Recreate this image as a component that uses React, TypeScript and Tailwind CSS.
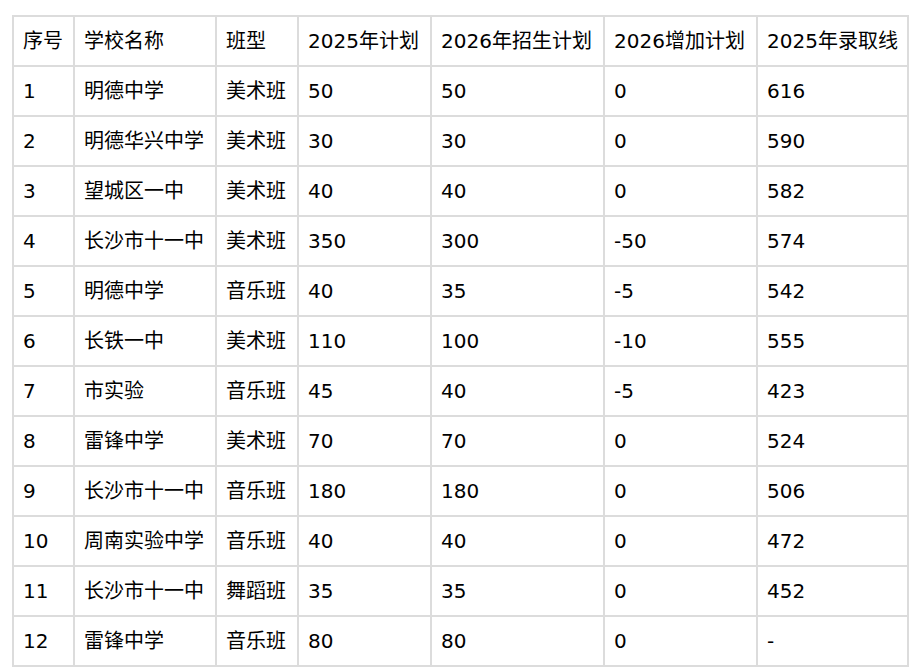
import React from "react";

const headers = ["序号", "学校名称", "班型", "2025年计划", "2026年招生计划", "2026增加计划", "2025年录取线"];
const rows: string[][] = [
  ["1", "明德中学", "美术班", "50", "50", "0", "616"],
  ["2", "明德华兴中学", "美术班", "30", "30", "0", "590"],
  ["3", "望城区一中", "美术班", "40", "40", "0", "582"],
  ["4", "长沙市十一中", "美术班", "350", "300", "-50", "574"],
  ["5", "明德中学", "音乐班", "40", "35", "-5", "542"],
  ["6", "长铁一中", "美术班", "110", "100", "-10", "555"],
  ["7", "市实验", "音乐班", "45", "40", "-5", "423"],
  ["8", "雷锋中学", "美术班", "70", "70", "0", "524"],
  ["9", "长沙市十一中", "音乐班", "180", "180", "0", "506"],
  ["10", "周南实验中学", "音乐班", "40", "40", "0", "472"],
  ["11", "长沙市十一中", "舞蹈班", "35", "35", "0", "452"],
  ["12", "雷锋中学", "音乐班", "80", "80", "0", "-"],
];
const widths = [61, 142, 82, 133, 173, 153, 151];

export default function App() {
  return (
    <div
      className="w-[916px] h-[672px] bg-white pt-[15px] pl-[12px] text-black"
      style={{ fontFamily: '"DejaVu Sans", "Noto Sans CJK SC", sans-serif' }}
    >
      <table className="border-collapse table-fixed text-[20px] leading-none">
        <colgroup>
          {widths.map((w, i) => (
            <col key={i} style={{ width: w }} />
          ))}
        </colgroup>
        <thead>
          <tr className="h-[50px]">
            {headers.map((h, i) => (
              <th key={i} className="border-2 border-[#dcdcdc] pl-[9px] text-left font-normal whitespace-nowrap align-middle">
                {h}
              </th>
            ))}
          </tr>
        </thead>
        <tbody>
          {rows.map((r, ri) => (
            <tr key={ri} className="h-[50px]">
              {r.map((c, ci) => (
                <td key={ci} className="border-2 border-[#dcdcdc] pl-[9px] text-left whitespace-nowrap align-middle">
                  {c}
                </td>
              ))}
            </tr>
          ))}
        </tbody>
      </table>
    </div>
  );
}
